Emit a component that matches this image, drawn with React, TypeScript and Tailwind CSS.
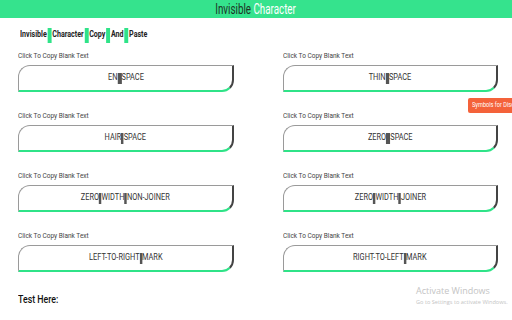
const items: { parts: string[]; bar: string }[] = [
  { parts: ["EN", "SPACE"], bar: "w-[5px]" },
  { parts: ["THIN", "SPACE"], bar: "w-[4px]" },
  { parts: ["HAIR", "SPACE"], bar: "w-[3px]" },
  { parts: ["ZERO", "SPACE"], bar: "w-[5px]" },
  { parts: ["ZERO", "WIDTH", "NON-JOINER"], bar: "w-[3px]" },
  { parts: ["ZERO", "WIDTH", "JOINER"], bar: "w-[3px]" },
  { parts: ["LEFT-TO-RIGHT", "MARK"], bar: "w-[3px]" },
  { parts: ["RIGHT-TO-LEFT", "MARK"], bar: "w-[3px]" },
];

const words = ["Invisible", "Character", "Copy", "And", "Paste"];

function CopyCell({ parts, bar }: { parts: string[]; bar: string }) {
  return (
    <div className="flex flex-col">
      <div className="h-[9px] leading-[9px] text-[7px] text-[#444]">
        <span className="inline-block origin-left scale-x-[0.93]">Click To Copy Blank Text</span>
      </div>
      <button className="mt-[4px] h-[27px] flex items-center justify-center bg-white border-t border-l border-t-[#9a9a9a] border-l-[#9a9a9a] border-r-2 border-r-[#444] border-b-2 border-b-[#2fe388] rounded-tl-[12px] rounded-br-[12px]">
        <span className="flex items-center text-[9px] text-[#333] scale-x-[0.82]">
          {parts.map((p, i) => (
            <span key={i} className="flex items-center">
              {i > 0 && <span className={`${bar} h-[11px] bg-[#555]`} />}
              {p}
            </span>
          ))}
        </span>
      </button>
    </div>
  );
}

export default function App() {
  return (
    <div className="relative w-[512px] h-[320px] overflow-hidden bg-white font-['Roboto',sans-serif]">
      {/* header */}
      <div className="h-[18px] bg-[#35e38d] flex items-center justify-center">
        <span className="inline-block text-[14px] leading-[18px] scale-x-[0.7]">
          <span className="text-[#1d3326]">Invisible</span>{" "}
          <span className="text-white">Character</span>
        </span>
      </div>

      {/* subtitle */}
      <div className="mt-[9px] h-[16px] pl-[20px] flex items-center text-[9px] font-bold text-[#222]">
        <span className="flex items-center origin-left scale-x-[0.79]">
          {words.map((w, i) => (
            <span key={w} className="flex items-center">
              {i > 0 && <span className="w-[5px] h-[15px] bg-[#2fe388] mx-[1px]" />}
              {w}
            </span>
          ))}
        </span>
      </div>

      {/* grid */}
      <div className="mt-[9px] pl-[18px] grid grid-cols-[216px_215px] gap-x-[49px] gap-y-[20px]">
        {items.map((it, i) => (
          <CopyCell key={i} parts={it.parts} bar={it.bar} />
        ))}
      </div>

      <div className="mt-[20px] pl-[18px] text-[11px] font-medium text-[#111]">
        <span className="inline-block origin-left scale-x-[0.8]">Test Here:</span>
      </div>

      {/* floating tab */}
      <div className="absolute left-[468px] top-[98px] h-[15px] pl-[4px] pr-[6px] flex items-center bg-[#f4623a] rounded-[2px] text-white text-[7px] whitespace-nowrap">
        <span className="inline-block origin-left scale-x-[0.8]">Symbols for Discord</span>
      </div>

      {/* watermark */}
      <div className="absolute left-[416px] top-[285px] font-['Open_Sans',sans-serif] text-[#c4c4c4] whitespace-nowrap">
        <div className="text-[9px] leading-[12px]">Activate Windows</div>
        <div className="text-[5.6px] leading-[10px]">Go to Settings to activate Windows.</div>
      </div>
    </div>
  );
}
